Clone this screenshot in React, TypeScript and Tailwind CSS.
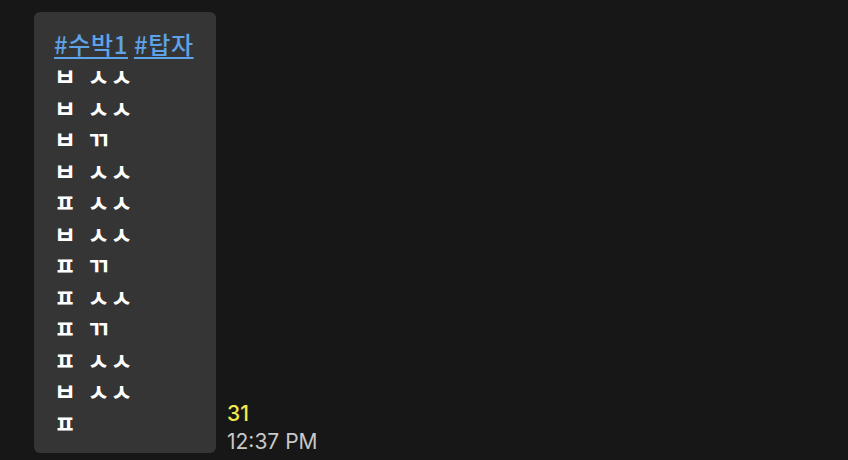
export default function App() {
    const lines = [
        "ㅂ ㅅㅅ",
        "ㅂ ㅅㅅ",
        "ㅂ ㄲ",
        "ㅂ ㅅㅅ",
        "ㅍ ㅅㅅ",
        "ㅂ ㅅㅅ",
        "ㅍ ㄲ",
        "ㅍ ㅅㅅ",
        "ㅍ ㄲ",
        "ㅍ ㅅㅅ",
        "ㅂ ㅅㅅ",
        "ㅍ",
    ];

    return (
        <div className="w-[848px] h-[460px] bg-[#171717] overflow-hidden font-['Inter','Noto_Sans_CJK_KR',sans-serif]">
            <div className="flex items-end pt-3 pl-[34px]">
                {/* Message bubble */}
                <div className="w-[182px] h-[441px] rounded-md bg-[#353535] pt-[16px] px-5 font-['Noto_Sans_CJK_KR',sans-serif]">
                    <div className="text-[24px] leading-[32px] tracking-[0.6px] text-[#5ea3ea] font-medium">
                        <a href="#" className="underline underline-offset-[3px] decoration-2">#수박1</a>{" "}
                        <a href="#" className="underline underline-offset-[3px] decoration-2">#탑자</a>
                    </div>
                    <div className="text-[24px] leading-[31.5px] tracking-[1px] [word-spacing:4px] text-white font-semibold">
                        {lines.map((l, i) => (
                            <div key={i} className="whitespace-pre">{l}</div>
                        ))}
                    </div>
                </div>

                {/* Meta */}
                <div className="ml-[11px] -mb-[3px] text-[21px] leading-[28px]">
                    <div className="text-[#f3e84a] font-medium">31</div>
                    <div className="text-[#c8c8c8]">12:37 PM</div>
                </div>
            </div>
        </div>
    );
}
